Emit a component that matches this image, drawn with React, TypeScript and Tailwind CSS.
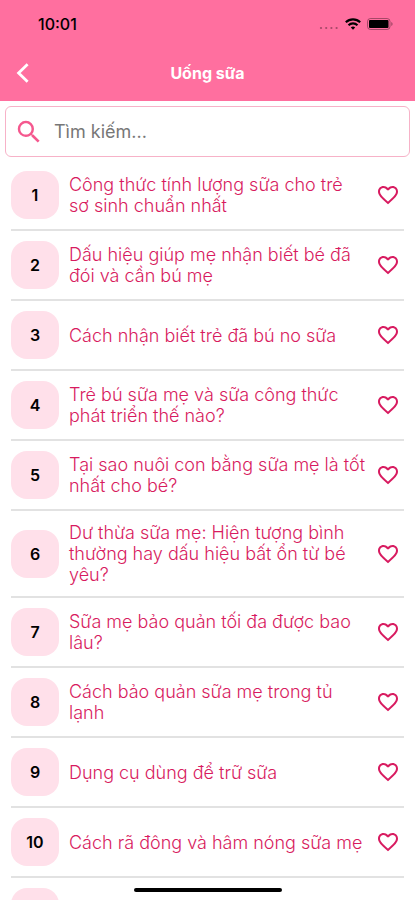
import { useState } from 'react';
import { MdFavorite, MdFavoriteBorder, MdSearch } from 'react-icons/md';

interface Article {
  id: number;
  title: string;
}

const articles: Article[] = [
  { id: 1, title: 'Công thức tính lượng sữa cho trẻ sơ sinh chuẩn nhất' },
  { id: 2, title: 'Dấu hiệu giúp mẹ nhận biết bé đã đói và cần bú mẹ' },
  { id: 3, title: 'Cách nhận biết trẻ đã bú no sữa' },
  { id: 4, title: 'Trẻ bú sữa mẹ và sữa công thức phát triển thế nào?' },
  { id: 5, title: 'Tại sao nuôi con bằng sữa mẹ là tốt nhất cho bé?' },
  { id: 6, title: 'Dư thừa sữa mẹ: Hiện tượng bình thường hay dấu hiệu bất ổn từ bé yêu?' },
  { id: 7, title: 'Sữa mẹ bảo quản tối đa được bao lâu?' },
  { id: 8, title: 'Cách bảo quản sữa mẹ trong tủ lạnh' },
  { id: 9, title: 'Dụng cụ dùng để trữ sữa' },
  { id: 10, title: 'Cách rã đông và hâm nóng sữa mẹ' },
];

function StatusBar() {
  return (
    <div className="flex h-11 items-center justify-between pr-[22px] pl-[38px] pt-1 text-black">
      <span className="text-base font-medium">10:01</span>
      <div className="flex items-center gap-1.5">
        <svg className="h-3 w-5" viewBox="0 0 20 12" fill="currentColor" opacity="0.35">
          <circle cx="2" cy="10" r="1.1" />
          <circle cx="7.2" cy="10" r="1.1" />
          <circle cx="12.4" cy="10" r="1.1" />
          <circle cx="17.6" cy="10" r="1.1" />
        </svg>
        <svg className="h-3 w-4" viewBox="0 0 16 12" fill="none" stroke="currentColor" strokeWidth="2.1">
          <path d="M0.8 4.3a10.4 10.4 0 0 1 14.4 0" />
          <path d="M3.5 7.2a6.5 6.5 0 0 1 9 0" />
          <path d="M8 11.8 5.8 9.5a3.2 3.2 0 0 1 4.4 0z" fill="currentColor" stroke="none" />
        </svg>
        <svg className="h-3 w-[26px]" viewBox="0 0 26 12" fill="currentColor">
          <rect x="0.5" y="0.5" width="22.5" height="11" rx="3" fill="none" stroke="currentColor" opacity="0.35" />
          <rect x="2" y="2" width="19.5" height="8" rx="1" />
          <path d="M24.3 4v4a2.2 2.2 0 0 0 0-4z" opacity="0.4" />
        </svg>
      </div>
    </div>
  );
}

function ArticleRow({ article }: { article: Article }) {
  const [liked, setLiked] = useState(false);
  const Heart = liked ? MdFavorite : MdFavoriteBorder;

  return (
    <li className="flex items-center border-b-2 border-[#e2e2e2] py-2.5">
      <span className="flex h-12 w-12 shrink-0 items-center justify-center rounded-2xl bg-[#ffe0ea] text-base font-semibold text-black">
        {article.id}
      </span>
      <a href="#" className="ml-2.5 min-w-0 flex-1 py-px text-lg leading-[21px] font-light text-[#d81b60]">
        {article.title}
      </a>
      <button
        aria-label="Yêu thích"
        onClick={() => setLiked(!liked)}
        className="ml-1.5 shrink-0 p-1 text-[#d81b60]"
      >
        <Heart className="h-6 w-6" />
      </button>
    </li>
  );
}

export default function App() {
  return (
    <div className="relative flex h-screen flex-col overflow-hidden bg-white font-['Inter',sans-serif]">
      <header className="shrink-0 bg-[#ff6f9f]">
        <StatusBar />
        <div className="grid h-[57px] grid-cols-[48px_1fr_48px] items-center text-white">
          <button aria-label="Quay lại" className="flex pl-4">
            <svg className="h-5 w-3.5" viewBox="0 0 14 20" fill="none" stroke="currentColor" strokeWidth="2.8">
              <path d="M11.6 1.2 2.6 10l9 8.8" />
            </svg>
          </button>
          <h1 className="text-center text-base font-bold">Uống sữa</h1>
        </div>
      </header>

      <label className="mx-[5px] mt-[5px] flex h-[51px] shrink-0 items-center gap-2.5 rounded-md border border-[#f7b2c8] pl-2">
        <MdSearch className="h-[30px] w-[30px] shrink-0 text-[#f5588e]" />
        <input
          type="text"
          aria-label="Tìm kiếm"
          placeholder="Tìm kiếm..."
          className="min-w-0 flex-1 text-lg outline-none placeholder:text-[#777]"
        />
      </label>

      <ul className="min-h-0 flex-1 overflow-hidden px-[11px] pt-1">
        {articles.map((a) => (
          <ArticleRow key={a.id} article={a} />
        ))}
        <li className="py-2.5">
          <span className="block h-12 w-12 rounded-2xl bg-[#ffe0ea]" />
        </li>
      </ul>

      <div className="absolute bottom-2 left-1/2 h-1 w-[148px] -translate-x-1/2 rounded-full bg-black" />
    </div>
  );
}
